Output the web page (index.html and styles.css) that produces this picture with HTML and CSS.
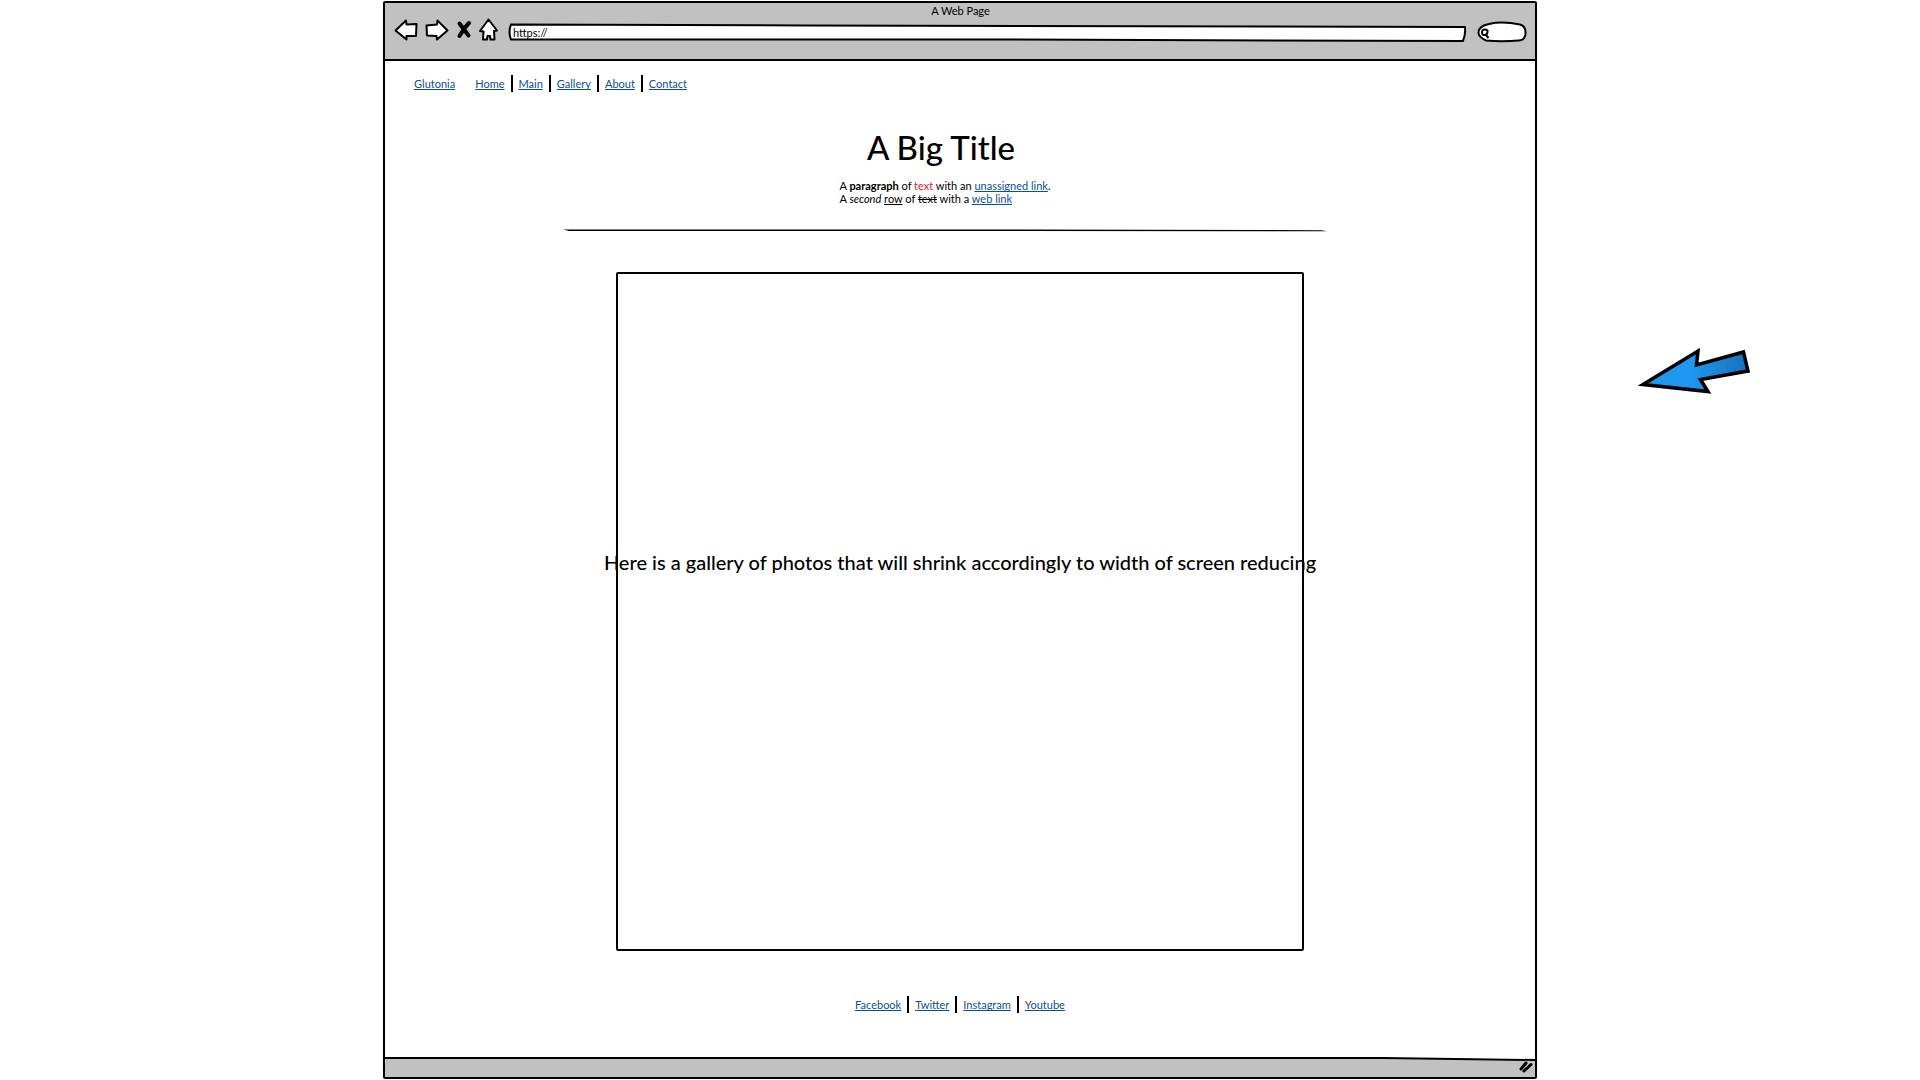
FILE: index.html
```html
<!DOCTYPE html>
<html lang="en">
<head>
<meta charset="utf-8">
<title>A Web Page</title>
<meta name="viewport" content="width=device-width, initial-scale=1">
<link rel="stylesheet" href="styles.css">
</head>
<body>
<div class="window">
  <header class="chrome">
    <p class="chrome-title">A Web Page</p>
    <div class="toolbar">
      <button class="tool" type="button" aria-label="Back">
        <svg width="24" height="24" viewBox="0 0 24 24"><path class="icon" d="M1.500 12.500 L12 2.500 L12.500 6.500 L22.500 6 L22 18 L12.500 18 L12.500 21.500 Z"/></svg>
      </button>
      <button class="tool" type="button" aria-label="Forward">
        <svg width="24" height="24" viewBox="0 0 24 24"><path class="icon" d="M22.500 12.500 L12.500 2.500 L12 6.500 L1.500 7.500 L2 17.500 L11.500 18 L12 21.500 Z"/></svg>
      </button>
      <button class="tool tool-stop" type="button" aria-label="Stop">
        <svg width="16" height="24" viewBox="0 0 16 24"><path class="cross" d="M3.500 5.500 L12.500 17.500 M13 5 Q9 9 3.500 18"/></svg>
      </button>
      <button class="tool tool-home" type="button" aria-label="Home">
        <svg width="22" height="24" viewBox="0 0 22 24"><path class="icon" d="M10.500 1.500 L2 13 L5.500 13.500 L5 21.500 L9 21.500 L9.500 18 L12 18 L12.500 21.500 L16.500 21.500 L16 13 L19 12.500 Z"/></svg>
      </button>
      <label class="field field-url">
        <svg class="sketch" viewBox="0 0 960 20" preserveAspectRatio="none" aria-hidden="true"><path d="M3 2.500 L300 3.500 L958 5 Q959 12 956 19 L480 17.500 L3 17.500 Q0 10 3 2.500 Z"/></svg>
        <input type="text" value="https://" aria-label="Address">
      </label>
      <label class="field field-search">
        <svg class="sketch" viewBox="0 0 50 22" aria-hidden="true"><path d="M12 3 Q25 0 43 3.500 Q49 5 48.500 13 Q48 19 42 19.500 Q25 21 9 19.500 Q1 16 1.500 11 Q2 5 12 3 Z"/><path d="M10.500 9 Q5 7.500 5 11 Q5 14.500 8 14 Q11 13.500 10.500 9 M9 14 L11.500 17"/></svg>
        <input type="search" aria-label="Search">
      </label>
    </div>
  </header>

  <main class="page">
    <nav class="links links-top" aria-label="Main">
      <a class="brand" href="#">Glutonia</a>
      <ul>
        <li><a href="#">Home</a></li>
        <li><a href="#">Main</a></li>
        <li><a href="#">Gallery</a></li>
        <li><a href="#">About</a></li>
        <li><a href="#">Contact</a></li>
      </ul>
    </nav>

    <section class="intro">
      <h1>A Big Title</h1>
      <p>A <b>paragraph</b> of <span class="red">text</span> with an <a href="#">unassigned link</a>.<br>A <i>second</i> <u>row</u> of <s>text</s> with a <a href="#">web link</a></p>
      <svg class="rule" viewBox="0 0 762 4" preserveAspectRatio="none" aria-hidden="true"><path d="M0 0.500 L400 0.500 L756 1.500 L762 3 L400 2.500 L6 2.500 Z"/></svg>
    </section>

    <section class="gallery">
      <p>Here is a gallery of photos that will shrink accordingly to width of screen reducing</p>
    </section>

    <nav class="links links-bottom" aria-label="Social">
      <ul>
        <li><a href="#">Facebook</a></li>
        <li><a href="#">Twitter</a></li>
        <li><a href="#">Instagram</a></li>
        <li><a href="#">Youtube</a></li>
      </ul>
    </nav>
  </main>

  <footer class="status">
    <svg class="status-edge" viewBox="0 0 1152 4" preserveAspectRatio="none" aria-hidden="true"><path class="above" d="M0 0 H1152 V3 L1000 1 H0 Z"/><path class="edge" d="M0 1 L1000 1 L1152 3"/></svg>
    <svg class="grip" width="14" height="12" viewBox="0 0 14 12" aria-hidden="true"><path d="M2 8 L7 2 M5 10 L12 3.500"/></svg>
  </footer>
</div>

<svg class="pointer" width="116" height="52" viewBox="0 0 116 52" aria-hidden="true">
  <defs>
    <linearGradient id="blue" x1="0" x2="1" y1="0" y2="0">
      <stop offset="0.450" stop-color="#1e97f0"/>
      <stop offset="1" stop-color="#1672b8"/>
    </linearGradient>
  </defs>
  <path d="M7 38.500 L62 5 L60.500 19 L107.500 6 L112 25 L64.500 33.500 L72 45.500 Z" fill="url(#blue)" stroke="#000" stroke-width="3.500"/>
</svg>
</body>
</html>
```
FILE: styles.css
```css
* {
  box-sizing: border-box;
}

body {
  margin: 0;
  position: relative;
  background: #fff;
  color: #000;
  font: 11px/13px Lato, "Open Sans", sans-serif;
}

h1,
p,
ul {
  margin: 0;
  padding: 0;
}

a {
  color: #0b4f91;
  text-underline-offset: 1px;
  text-decoration-thickness: 1px;
  text-decoration-skip-ink: none;
}

.window {
  display: flex;
  flex-direction: column;
  width: 60.1%;
  min-height: calc(100vh - 2px);
  margin: 1px auto;
  border: 2px solid #000;
  border-radius: 2px;
}

/* Browser bar */
.chrome {
  background: #c1c1c1;
  border-bottom: 2px solid #000;
  padding: 1px 8px 16px 9px;
}

.chrome-title {
  text-align: center;
}

.toolbar {
  display: flex;
  align-items: center;
  gap: 6px;
}

.tool {
  display: flex;
  padding: 0;
  border: 0;
  background: none;
}

.tool + .tool {
  margin-left: 1px;
}

.tool-stop + .tool-home {
  margin-left: 0;
}

.icon {
  fill: #fff;
  stroke: #000;
  stroke-width: 2;
  stroke-linejoin: round;
}

.cross {
  fill: none;
  stroke: #000;
  stroke-width: 4;
  stroke-linecap: round;
}

.field {
  position: relative;
  display: flex;
  margin-top: 4px;
}

.field-url {
  flex: 1;
  height: 20px;
  margin-left: 2px;
}

.field-search {
  width: 50px;
  height: 22px;
  margin-left: 4px;
}

.sketch {
  position: absolute;
  inset: 0;
  width: 100%;
  height: 100%;
}

.sketch path {
  fill: #fff;
  stroke: #000;
  stroke-width: 2;
  vector-effect: non-scaling-stroke;
}

.field input {
  position: relative;
  width: 100%;
  padding: 0 5px;
  border: 0;
  background: none;
  font: inherit;
}

.field-search input {
  padding-left: 14px;
}

/* Page body */
.page {
  flex: 1;
  padding: 14px 29px 0;
}

.links,
.links ul {
  display: flex;
  list-style: none;
}

.links ul {
  gap: 6px;
}

.links li {
  height: 17px;
  line-height: 17px;
}

.links li + li {
  padding-left: 6px;
  border-left: 2px solid #000;
}

.brand {
  line-height: 17px;
  margin-right: 20px;
}

.links-bottom {
  justify-content: center;
  margin-top: 45px;
  margin-bottom: 40px;
}

.intro {
  display: flex;
  flex-direction: column;
  align-items: center;
  padding-right: 30px;
}

h1 {
  margin-top: 35px;
  padding-right: 8px;
  font-size: 33px;
  font-weight: 500;
  line-height: 40px;
}

.intro p {
  margin-top: 12px;
}

.red {
  color: #d9252a;
}

.rule {
  width: 72%;
  height: 3px;
  margin-top: 24px;
}

.gallery {
  display: flex;
  align-items: center;
  justify-content: center;
  width: 63%;
  aspect-ratio: 688 / 679;
  margin: 40px auto 0;
  padding-bottom: 98px;
  border: 2px solid #000;
  border-radius: 2px;
}

.gallery p {
  flex: none;
  font-size: 20px;
  font-weight: 500;
  line-height: 24px;
  white-space: nowrap;
}

/* Bottom bar */
.status {
  position: relative;
  display: flex;
  justify-content: flex-end;
  align-items: center;
  height: 20px;
  padding-right: 2px;
  background: #c1c1c1;
}

.status-edge {
  position: absolute;
  top: 0;
  left: 0;
  width: 100%;
  height: 4px;
  overflow: visible;
}

.above {
  fill: #fff;
}

.edge {
  fill: none;
  stroke: #000;
  stroke-width: 2;
  vector-effect: non-scaling-stroke;
}

.grip path {
  fill: none;
  stroke: #000;
  stroke-width: 3;
  stroke-linecap: round;
}

/* Callout arrow laid over the canvas beside the window */
.pointer {
  position: absolute;
  top: 346px;
  left: 85.200%;
}
```
